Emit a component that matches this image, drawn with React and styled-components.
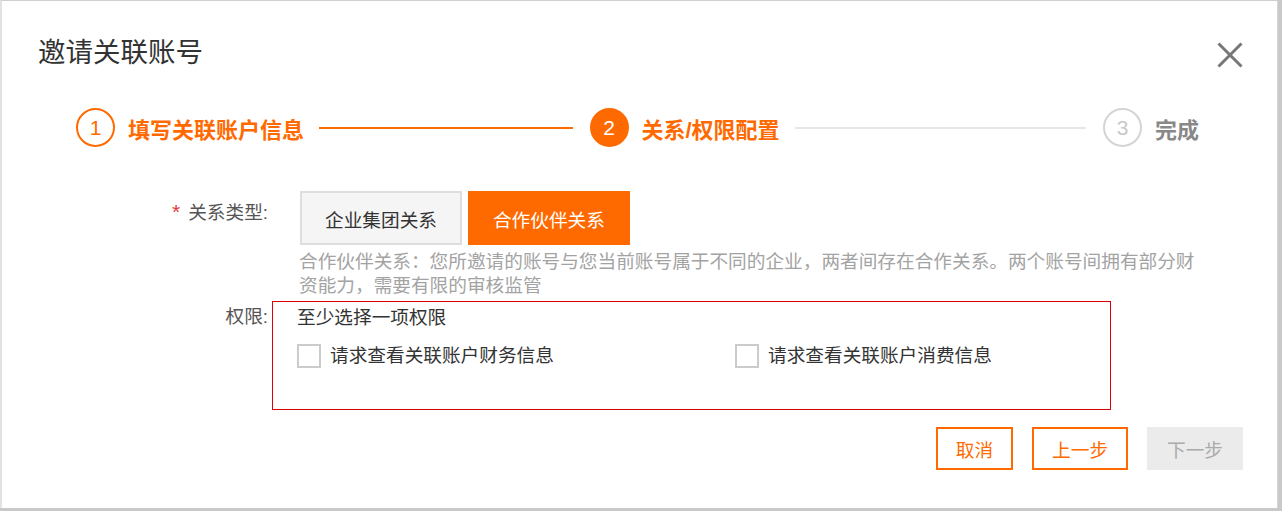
import React from 'react';
import styled, { createGlobalStyle } from 'styled-components';

const orange = '#ff6a00';

const Global = createGlobalStyle`
  html, body {
    margin: 0;
    padding: 0;
    background: #c9c9c9;
  }
  body {
    font-family: "Liberation Sans", "Noto Sans CJK SC", sans-serif;
    font-size: 18.67px;
    color: #333;
  }
`;

const Dialog = styled.div`
  box-sizing: border-box;
  width: 1278px;
  height: 508px;
  background: #fff;
  border-top: 1px solid #cfcfcf;
  border-left: 2px solid #e2e2e2;
  border-right: 1px solid #d6d6d6;
  display: flex;
  flex-direction: column;
`;

const Header = styled.div`
  display: flex;
  align-items: center;
  justify-content: space-between;
  padding: 34px 34px 0 36px;
  height: 36px;
`;

const Title = styled.div`
  font-size: 27.5px;
  line-height: 36px;
  color: #333;
`;

const Close = styled.button`
  border: none;
  background: none;
  padding: 0;
  width: 26px;
  height: 26px;
  margin-top: 4px;
  cursor: pointer;
  display: flex;
`;

const Steps = styled.div`
  display: flex;
  align-items: center;
  margin-top: 37px;
  padding: 0 78px 0 74px;
`;

const Step = styled.div`
  display: flex;
  align-items: center;
  flex: ${(p) => (p.$last ? '0 0 auto' : '1 1 0')};
`;

const Circle = styled.div`
  box-sizing: border-box;
  flex: 0 0 auto;
  width: 39px;
  height: 39px;
  border-radius: 50%;
  display: flex;
  align-items: center;
  justify-content: center;
  font-family: "Liberation Sans", Arial, sans-serif;
  font-size: 21px;
  border: 2px solid ${(p) => (p.$state === 'todo' ? '#d4d4d4' : orange)};
  background: ${(p) => (p.$state === 'active' ? orange : '#fff')};
  color: ${(p) => (p.$state === 'active' ? '#fff' : p.$state === 'todo' ? '#c8c8c8' : orange)};
`;

const StepLabel = styled.div`
  margin-left: 13px;
  font-size: 22px;
  font-weight: bold;
  white-space: nowrap;
  color: ${(p) => (p.$state === 'todo' ? '#888' : orange)};
`;

const Line = styled.div`
  flex: 1;
  height: 2px;
  margin: 0 17px 0 15px;
  background: ${(p) => (p.$done ? orange : '#e6e6e6')};
`;

const Form = styled.div`
  display: flex;
  flex-direction: column;
  margin-top: 44px;
`;

const Row = styled.div`
  display: flex;
  align-items: flex-start;
  margin-top: ${(p) => p.$gap || 0}px;
`;

const Label = styled.div`
  box-sizing: border-box;
  width: 266px;
  flex: 0 0 auto;
  text-align: right;
  line-height: 28px;
  padding-top: ${(p) => p.$top || 0}px;
  color: #555;
  white-space: nowrap;
`;

const Star = styled.span`
  color: #e4393c;
  margin-right: 8px;
  vertical-align: top;
  font-size: 21px;
  position: relative;
  top: -1px;
`;

const Field = styled.div`
  margin-left: 4px;
  padding-left: 28px;
`;

const Segments = styled.div`
  display: flex;
  gap: 6px;
`;

const Segment = styled.button`
  box-sizing: border-box;
  height: 54px;
  padding: 0 23px;
  font: inherit;
  cursor: pointer;
  border: 2px solid ${(p) => (p.$active ? orange : '#dedede')};
  background: ${(p) => (p.$active ? orange : '#f5f5f5')};
  color: ${(p) => (p.$active ? '#fff' : '#333')};
`;

const Hint = styled.div`
  width: 900px;
  margin-top: 5px;
  margin-left: -1px;
  line-height: 24px;
  color: #a3a3a3;
`;

const PermBox = styled.div`
  box-sizing: border-box;
  margin-left: 4px;
  width: 839px;
  border: 1px solid #e00000;
  padding: 2px 0 39px 24px;
`;

const PermTitle = styled.div`
  line-height: 28px;
  color: #333;
`;

const Checks = styled.div`
  display: grid;
  grid-template-columns: 438px 1fr;
  margin-top: 10px;
`;

const Check = styled.label`
  display: flex;
  align-items: center;
  gap: 9px;
  line-height: 28px;
  color: #333;
  cursor: pointer;
`;

const Box = styled.span`
  box-sizing: border-box;
  width: 24px;
  height: 24px;
  border: 2px solid #cbcbcb;
  background: #fff;
`;

const Footer = styled.div`
  display: flex;
  justify-content: flex-end;
  gap: 19px;
  margin-top: 17px;
  padding-right: 34px;
`;

const Action = styled.button`
  box-sizing: border-box;
  height: 43px;
  padding: 0 18px;
  font: inherit;
  cursor: pointer;
  border: 2px solid ${(p) => (p.$disabled ? '#ebebeb' : orange)};
  background: ${(p) => (p.$disabled ? '#ebebeb' : '#fff')};
  color: ${(p) => (p.$disabled ? '#aaa' : orange)};
`;

const steps = [
  { n: 1, label: '填写关联账户信息', state: 'done' },
  { n: 2, label: '关系/权限配置', state: 'active' },
  { n: 3, label: '完成', state: 'todo' },
];

export default function App() {
  return (
    <>
      <Global />
      <Dialog>
        <Header>
          <Title>邀请关联账号</Title>
          <Close aria-label="关闭">
            <svg width="26" height="26" viewBox="0 0 26 26">
              <path d="M1.5 1.5 L24.5 24.5 M24.5 1.5 L1.5 24.5" stroke="#777" strokeWidth="3" fill="none" />
            </svg>
          </Close>
        </Header>

        <Steps>
          {steps.map((s, i) => (
            <Step key={s.n} $last={i === steps.length - 1}>
              <Circle $state={s.state}>{s.n}</Circle>
              <StepLabel $state={s.state}>{s.label}</StepLabel>
              {i < steps.length - 1 && <Line $done={s.state === 'done'} />}
            </Step>
          ))}
        </Steps>

        <Form>
          <Row>
            <Label $top={8}>
              <Star>*</Star>关系类型:
            </Label>
            <Field>
              <Segments>
                <Segment>企业集团关系</Segment>
                <Segment $active>合作伙伴关系</Segment>
              </Segments>
              <Hint>
                合作伙伴关系：您所邀请的账号与您当前账号属于不同的企业，两者间存在合作关系。两个账号间拥有部分财资能力，需要有限的审核监管
              </Hint>
            </Field>
          </Row>

          <Row $gap={3}>
            <Label $top={2}>权限:</Label>
            <PermBox>
              <PermTitle>至少选择一项权限</PermTitle>
              <Checks>
                <Check>
                  <Box />
                  请求查看关联账户财务信息
                </Check>
                <Check>
                  <Box />
                  请求查看关联账户消费信息
                </Check>
              </Checks>
            </PermBox>
          </Row>
        </Form>

        <Footer>
          <Action>取消</Action>
          <Action>上一步</Action>
          <Action $disabled>下一步</Action>
        </Footer>
      </Dialog>
    </>
  );
}
